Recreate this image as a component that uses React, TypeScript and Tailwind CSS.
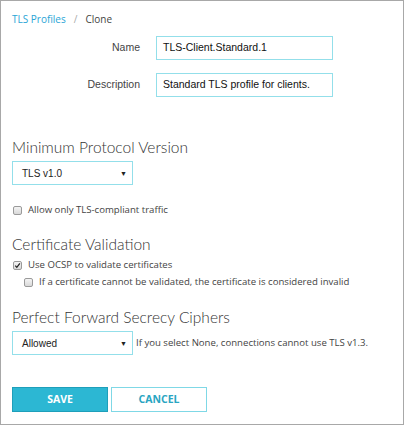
import React from 'react';

function Checkbox({ checked = false }: { checked?: boolean }) {
  return (
    <span className="inline-flex h-[9px] w-[9px] shrink-0 items-center justify-center rounded-[2px] border border-[#9a9a9a] bg-gradient-to-b from-[#f4f4f4] to-[#d9d9d9]">
      {checked && (
        <svg viewBox="0 0 10 10" className="h-[9px] w-[9px]">
          <path d="M1.8 5.2 L4 7.6 L8.4 1.8" fill="none" stroke="#222" strokeWidth="1.8" />
        </svg>
      )}
    </span>
  );
}

function Select({ value }: { value: string }) {
  return (
    <div className="flex h-[24px] w-[121px] items-center justify-between border border-[#93dfea] bg-white pl-[9px] pr-[5px] text-[10px] text-[#222] font-['Liberation_Sans',Arial,sans-serif]">
      <span>{value}</span>
      <span className="text-[7px] leading-none">▼</span>
    </div>
  );
}

export default function App() {
  const heading = "flex h-[16px] items-center text-[15.5px] font-light text-[#333] font-['Lato',sans-serif] leading-none";
  const row = "flex h-[14px] items-center gap-[6px] text-[9.6px] text-[#444] font-['Open_Sans',sans-serif]";

  return (
    <div className="h-[425px] w-[404px] border border-[#a8a8a8] bg-white px-[11px]">
      <div className="flex items-center gap-[8px] pt-[13px] text-[10px] font-['Open_Sans',sans-serif] leading-none">
        <span className="text-[#2aa5d6]">TLS Profiles</span>
        <span className="text-[#aaa]">/</span>
        <span className="text-[#444]">Clone</span>
      </div>

      <div className="mt-[12px] grid grid-cols-[128px_177px] items-center gap-x-[16px] gap-y-[13px] text-[10.5px] font-['Liberation_Sans',Arial,sans-serif]">
        <div className="text-right text-[#444]">Name</div>
        <div className="flex h-[24px] items-center border border-[#93dfea] px-[6px] text-[#111]">TLS-Client.Standard.1</div>
        <div className="text-right text-[#444]">Description</div>
        <div className="flex h-[24px] items-center border border-[#93dfea] px-[6px] text-[#111]">Standard TLS profile for clients.</div>
      </div>

      <div className={`mt-[43px] ${heading}`}>Minimum Protocol Version</div>
      <div className="mt-[5px]">
        <Select value="TLS v1.0" />
      </div>

      <div className={`mt-[18px] pl-[1px] ${row}`}>
        <Checkbox />
        <span>Allow only TLS-compliant traffic</span>
      </div>

      <div className={`mt-[20px] ${heading}`}>Certificate Validation</div>
      <div className={`mt-[5px] pl-[1px] ${row}`}>
        <Checkbox checked />
        <span>Use OCSP to validate certificates</span>
      </div>
      <div className={`mt-[3px] pl-[12px] ${row}`}>
        <Checkbox />
        <span>If a certificate cannot be validated, the certificate is considered invalid</span>
      </div>

      <div className={`mt-[21px] ${heading}`}>Perfect Forward Secrecy Ciphers</div>
      <div className="mt-[5px] flex items-center gap-[3px]">
        <Select value="Allowed" />
        <span className="text-[9.6px] text-[#444] font-['Open_Sans',sans-serif]">If you select None, connections cannot use TLS v1.3.</span>
      </div>

      <div className="mt-[32px] flex gap-[3px] text-[10.5px] font-bold font-['Open_Sans',sans-serif]">
        <button className="h-[25px] w-[96px] border border-[#1e9fba] bg-[#2cb7d3] text-white">SAVE</button>
        <button className="h-[25px] w-[96px] border border-[#7fd8e6] bg-white text-[#2aa5c2]">CANCEL</button>
      </div>
    </div>
  );
}
